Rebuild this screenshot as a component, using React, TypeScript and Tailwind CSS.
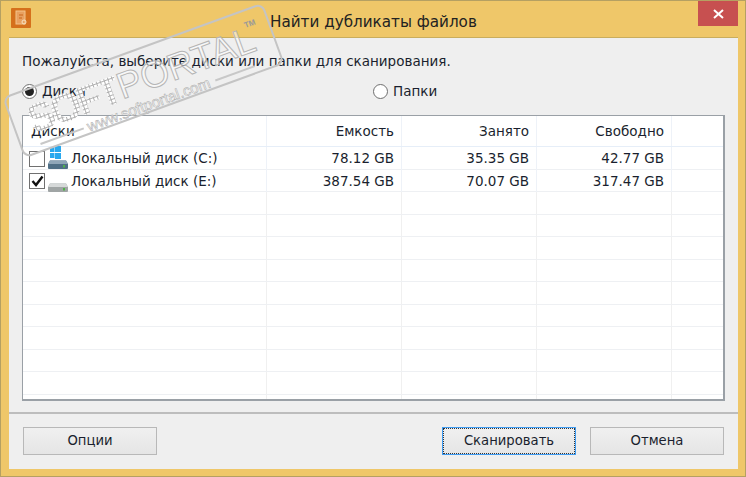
const rows = Array.from({ length: 10 });
const cell = "border-r border-[#eef2f8] flex items-center justify-end pr-[7px]";

function Drive({ win }: { win?: boolean }) {
  return (
    <svg width="22" height="24" viewBox="0 0 22 24" className="shrink-0">
      {win && (
        <g fill="#29a8ee">
          <rect x="3" y="1" width="4.500" height="5" />
          <rect x="8" y="0" width="6" height="6" />
          <rect x="3" y="7" width="4.500" height="5" />
          <rect x="8" y="7" width="6" height="6" />
        </g>
      )}
      <path d="M3 14.500 L19 14.500 L21 18 L21 22 Q21 23 20 23 L2 23 Q1 23 1 22 L1 18 Z" fill={win ? "#4f6f86" : "#a0a5a5"} />
      <path d="M3 14.500 L19 14.500 L21 18 L1 18 Z" fill={win ? "#8fa6b8" : "#d6d9d9"} />
      <rect x="16" y="19" width="2" height="2.500" fill="#4fb34a" />
    </svg>
  );
}

function Radio({ on, label }: { on?: boolean; label: string }) {
  return (
    <div className="flex items-center gap-[5px]">
      <div className="w-[15px] h-[15px] rounded-full border border-[#6f6f6f] bg-white flex items-center justify-center">
        {on && <div className="w-[9px] h-[9px] rounded-full bg-[#222]" />}
      </div>
      <span>{label}</span>
    </div>
  );
}

function Btn({ label, focus }: { label: string; focus?: boolean }) {
  return (
    <button
      className={`w-[134px] h-[28px] text-[13.200px] text-[#1a1f2e] bg-gradient-to-b from-[#f0f0f0] to-[#e5e5e5] border flex items-center justify-center ${
        focus ? "border-[#3d9bf2] outline-1 outline-dotted -outline-offset-2 outline-[#333]" : "border-[#b8b8b8]"
      }`}
    >
      {label}
    </button>
  );
}

function Check({ on }: { on?: boolean }) {
  return (
    <div className="w-[16px] h-[16px] border border-[#707070] bg-white flex items-center justify-center shrink-0">
      {on && (
        <svg width="13" height="12" viewBox="0 0 13 12">
          <path d="M1.500 6 L5 10 L11.500 1.500" fill="none" stroke="#111" strokeWidth="2.400" />
        </svg>
      )}
    </div>
  );
}

function Row({ name, win, on, a, b, c }: { name: string; win?: boolean; on?: boolean; a: string; b: string; c: string }) {
  return (
    <div className="grid grid-cols-[244px_135px_135px_135px_1fr] h-[22.500px] border-b border-[#eef0f3]">
      <div className="border-r border-[#eef2f8] flex items-center pl-[6px] gap-[3px]">
        <Check on={on} />
        <div className="-ml-[1px] -mt-[1px]"><Drive win={win} /></div>
        <span className="-ml-[1px]">{name}</span>
      </div>
      <div className={cell}>{a}</div>
      <div className={cell}>{b}</div>
      <div className={cell}>{c}</div>
      <div />
    </div>
  );
}

export default function App() {
  return (
    <div
      className="relative w-[746px] h-[477px] overflow-hidden bg-[#efc769] border border-[#b5a062] flex flex-col pl-[8px] pr-[7px] pb-[7px] text-[13.500px] text-[#1a1f2e]"
      style={{ fontFamily: '"DejaVu Sans", Tahoma, sans-serif' }}
    >
      <div className="h-[36px] shrink-0 flex items-start relative">
        <div className="mt-[7px] ml-[2px] w-[20px] h-[20px] bg-[#d5701c] flex items-center justify-center rounded-[1px]">
          <svg width="14" height="16" viewBox="0 0 14 16">
            <rect x="2" y="1" width="9" height="13" fill="#e8a060" stroke="#f3c38a" />
            <path d="M5 5h4M5 8h3" stroke="#c9651a" />
            <circle cx="10" cy="12" r="2" fill="none" stroke="#f7e3c5" />
          </svg>
        </div>
        <div className="absolute left-[261px] top-[10px] text-[15.200px] text-[#222]">Найти дубликаты файлов</div>
        <div className="absolute right-[0px] top-0 w-[40px] h-[25px] bg-[#c75050] flex items-center justify-center">
          <svg width="11" height="10" viewBox="0 0 11 10">
            <path d="M1 1 L10 9 M10 1 L1 9" stroke="#fff" strokeWidth="2" />
          </svg>
        </div>
      </div>

      <div className="flex-1 flex flex-col bg-[#efefef] border-t border-[#c9ad5d] min-h-0">
        <div className="pt-[13px] pl-[13px] h-[32px] shrink-0">Пожалуйста, выберите диски или папки для сканирования.</div>
        <div className="flex h-[30px] items-center pl-[13px] mt-[6px] shrink-0">
          <div className="w-[351px]"><Radio on label="Диски" /></div>
          <Radio label="Папки" />
        </div>
        <div className="mx-[13px] mt-[9px] h-[286px] shrink-0 bg-white border border-[#9aa0a6] border-b-2 border-r-2 overflow-hidden">
          <div className="grid grid-cols-[244px_135px_135px_135px_1fr] h-[31px] border-b border-[#e6eef8]">
            <div className="border-r border-[#eef2f8] flex items-center pl-[8px]">Диски</div>
            <div className={cell}>Емкость</div>
            <div className={cell}>Занято</div>
            <div className={cell}>Свободно</div>
            <div />
          </div>
          <Row name="Локальный диск (C:)" win a="78.12 GB" b="35.35 GB" c="42.77 GB" />
          <Row name="Локальный диск (E:)" on a="387.54 GB" b="70.07 GB" c="317.47 GB" />
          {rows.map((_, i) => (
            <div key={i} className="grid grid-cols-[244px_135px_135px_135px_1fr] h-[22.500px] border-b border-[#eef0f3]">
              <div className="border-r border-[#f0f0f0]" />
              <div className="border-r border-[#f0f0f0]" />
              <div className="border-r border-[#f0f0f0]" />
              <div className="border-r border-[#f0f0f0]" />
              <div />
            </div>
          ))}
        </div>
        <div className="mt-[11px] border-t-2 border-[#bdbdbd] flex-1 flex items-start justify-between pl-[14px] pr-[14px] pt-[13px]">
          <Btn label="Опции" />
          <div className="flex gap-[14px]">
            <Btn label="Сканировать" focus />
            <Btn label="Отмена" />
          </div>
        </div>
      </div>

      <div
        className="absolute left-[4px] top-[47px] w-[277px] h-[65px] -rotate-[20deg] border-2 border-[#c4c4c4] rounded-[8px] pointer-events-none"
        style={{ fontFamily: '"Liberation Sans", Arial, sans-serif' }}
      >
        <div className="absolute left-[15px] top-[9px] text-[40px] font-bold leading-[40px] tracking-[-3px] bg-clip-text text-transparent bg-[linear-gradient(#b0b0b0_1px,transparent_1px),linear-gradient(90deg,#b0b0b0_1px,#ffffff_1px)] bg-[length:4px_4px]">
          SOFT
        </div>
        <div className="absolute left-[110px] top-[10px] text-[37px] leading-[37px] text-white/50 [-webkit-text-stroke:1px_#b5b5b5]">
          PORTAL
        </div>
        <div className="absolute left-[250px] top-[9px] text-[8px] leading-[10px] text-[#999] font-bold">TM</div>
        <div className="absolute left-[18px] top-[54px] w-[46px] h-[2px] bg-[#c8c8c8]" />
        <div className="absolute left-[68px] top-[47px] text-[15px] leading-[16px] text-white/70 [-webkit-text-stroke:0.5px_#a8a8a8]">
          www.softportal.com
        </div>
        <div className="absolute left-[204px] top-[54px] w-[42px] h-[2px] bg-[#c8c8c8]" />
      </div>
    </div>
  );
}
